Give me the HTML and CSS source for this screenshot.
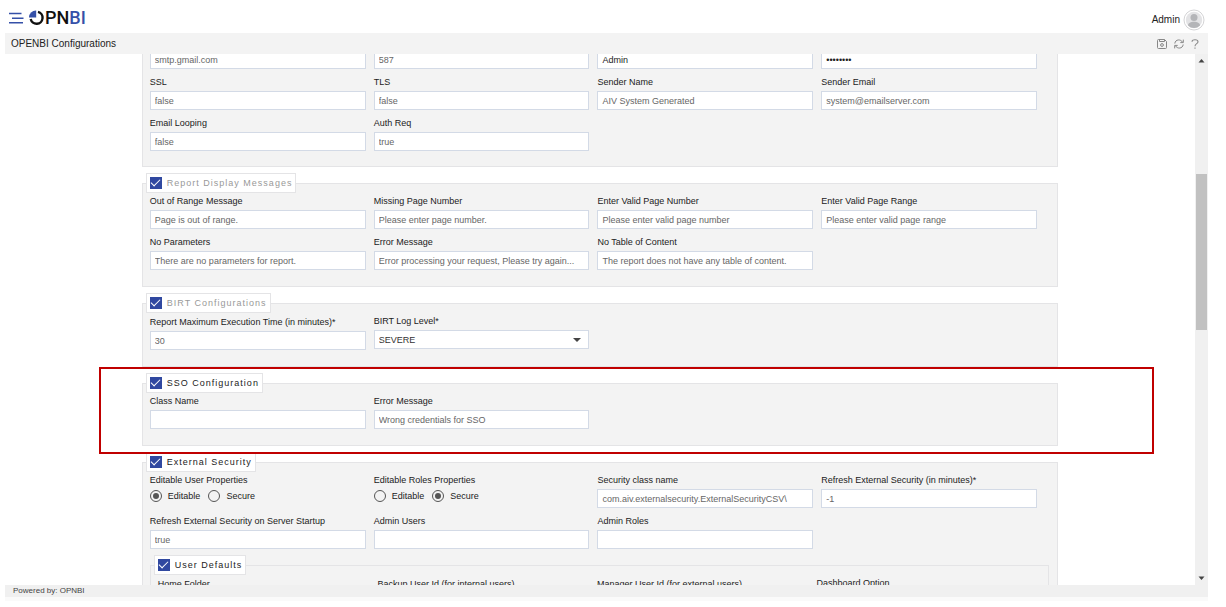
FILE: index.html
```html
<!DOCTYPE html>
<html lang="en">
<head>
<meta charset="utf-8">
<title>OPENBI Configurations</title>
<link rel="stylesheet" href="styles.css">
</head>
<body>
<div class="app">
  <header class="topbar">
    <button class="icon-button" type="button" aria-label="Menu">
      <svg width="15" height="12" viewBox="0 0 15 12" fill="none" stroke="#3550a8" stroke-width="1.6"><path d="M0 1.500h12.500M3 6.200h11.500M0 10.800h14"/></svg>
    </button>
    <div class="logo">
      <svg width="16" height="16" viewBox="0 0 16 16"><path d="M7.200 7.600V.4A7 7 0 0 0 0 7.600z" fill="#3550a8"/><path d="M9 1.900A6 6 0 1 1 1.700 9" fill="none" stroke="#111" stroke-width="2.400"/></svg>
      <span>PN<span class="logo-accent">BI</span></span>
    </div>
    <div class="account">
      <span>Admin</span>
      <svg width="22" height="22" viewBox="0 0 22 22"><circle cx="11" cy="11" r="10" fill="#fff" stroke="#d4d4d6"/><circle cx="11" cy="11" r="8.200" fill="#e3e3e5"/><circle cx="11" cy="8.500" r="3.500" fill="#b4b5b8"/><path d="M5 16.500c0-5 12-5 12 0a8.200 8.200 0 0 1-12 0z" fill="#b4b5b8"/></svg>
    </div>
  </header>

  <div class="titlebar">
    <h1 class="title">OPENBI Configurations</h1>
    <div class="tools">
      <button class="icon-button" type="button" aria-label="Save">
        <svg width="10" height="10" viewBox="0 0 10 10" fill="none" stroke="#888"><path d="M1.500.5h6l2 2v6a1 1 0 0 1-1 1h-7a1 1 0 0 1-1-1v-7a1 1 0 0 1 1-1z"/><path d="M2.500.5v2h5v-2"/><circle cx="5" cy="6" r="1.400"/></svg>
      </button>
      <button class="icon-button" type="button" aria-label="Refresh">
        <svg width="10" height="10" viewBox="0 0 10 10" fill="none" stroke="#888"><path d="M.8 4.500C1.300 0 7 0 8.500 3.200M9.200 5.500C8.700 10 3 10 1.500 6.800M9.300.6v3H6.300M.7 9.400v-3h3"/></svg>
      </button>
      <button class="icon-button" type="button" aria-label="Help">
        <svg width="8" height="10" viewBox="0 0 8 10" fill="none" stroke="#888" stroke-width="1.100"><path d="M1 2.800C1 .1 7 .1 7 2.800 7 4.700 4 4.600 4 7.200M4 8.500v1.300"/></svg>
      </button>
    </div>
  </div>

  <div class="viewport">
    <main class="pane">
      <form class="form">
        <fieldset class="section section-first">
          <div class="grid">
            <div class="field"><input class="text" aria-label="Host" value="smtp.gmail.com"></div>
            <div class="field"><input class="text" aria-label="Port" value="587"></div>
            <div class="field"><input class="text text-dark" aria-label="User" value="Admin"></div>
            <div class="field"><input class="text text-dark" type="password" aria-label="Password" value="password"></div>
            <div class="field"><label for="ssl">SSL</label><input class="text" id="ssl" value="false"></div>
            <div class="field"><label for="tls">TLS</label><input class="text" id="tls" value="false"></div>
            <div class="field"><label for="sname">Sender Name</label><input class="text" id="sname" value="AIV System Generated"></div>
            <div class="field"><label for="smail">Sender Email</label><input class="text" id="smail" value="system@emailserver.com"></div>
            <div class="field"><label for="loop">Email Looping</label><input class="text" id="loop" value="false"></div>
            <div class="field"><label for="auth">Auth Req</label><input class="text" id="auth" value="true"></div>
          </div>
        </fieldset>

        <fieldset class="section">
          <legend class="legend legend-muted"><label class="toggle"><input class="check" type="checkbox" checked>Report Display Messages</label></legend>
          <div class="grid">
            <div class="field"><label for="range">Out of Range Message</label><input class="text" id="range" value="Page is out of range."></div>
            <div class="field"><label for="missing">Missing Page Number</label><input class="text" id="missing" value="Please enter page number."></div>
            <div class="field"><label for="validnum">Enter Valid Page Number</label><input class="text" id="validnum" value="Please enter valid page number"></div>
            <div class="field"><label for="validrange">Enter Valid Page Range</label><input class="text" id="validrange" value="Please enter valid page range"></div>
            <div class="field"><label for="noparam">No Parameters</label><input class="text" id="noparam" value="There are no parameters for report."></div>
            <div class="field"><label for="err">Error Message</label><input class="text" id="err" value="Error processing your request, Please try again..."></div>
            <div class="field"><label for="notoc">No Table of Content</label><input class="text" id="notoc" value="The report does not have any table of content."></div>
          </div>
        </fieldset>

        <fieldset class="section">
          <legend class="legend legend-muted"><label class="toggle"><input class="check" type="checkbox" checked>BIRT Configurations</label></legend>
          <div class="grid">
            <div class="field"><label for="exec">Report Maximum Execution Time (in minutes)*</label><input class="text" id="exec" value="30"></div>
            <div class="field field-select"><label for="log">BIRT Log Level*</label>
              <div class="select-wrap"><select class="text select" id="log"><option>SEVERE</option></select><svg class="caret" width="8" height="4" viewBox="0 0 8 4"><path d="M0 0h8L4 4z" fill="#444"/></svg></div>
            </div>
          </div>
        </fieldset>

        <fieldset class="section section-sso">
          <legend class="legend"><label class="toggle"><input class="check" type="checkbox" checked>SSO Configuration</label></legend>
          <div class="grid">
            <div class="field"><label for="cls">Class Name</label><input class="text" id="cls"></div>
            <div class="field"><label for="ssoerr">Error Message</label><input class="text" id="ssoerr" value="Wrong credentials for SSO"></div>
          </div>
          <div class="highlight"></div>
        </fieldset>

        <fieldset class="section">
          <legend class="legend"><label class="toggle"><input class="check" type="checkbox" checked>External Security</label></legend>
          <div class="grid">
            <div class="field field-radio" role="radiogroup" aria-labelledby="eup">
              <span id="eup">Editable User Properties</span>
              <div class="options"><label class="option"><input class="radio" type="radio" name="eup" checked>Editable</label><label class="option"><input class="radio" type="radio" name="eup">Secure</label></div>
            </div>
            <div class="field field-radio" role="radiogroup" aria-labelledby="erp">
              <span id="erp">Editable Roles Properties</span>
              <div class="options"><label class="option"><input class="radio" type="radio" name="erp">Editable</label><label class="option"><input class="radio" type="radio" name="erp" checked>Secure</label></div>
            </div>
            <div class="field"><label for="sec">Security class name</label><input class="text" id="sec" value="com.aiv.externalsecurity.ExternalSecurityCSV\"></div>
            <div class="field"><label for="refresh">Refresh External Security (in minutes)*</label><input class="text" id="refresh" value="-1"></div>
            <div class="field"><label for="startup">Refresh External Security on Server Startup</label><input class="text" id="startup" value="true"></div>
            <div class="field"><label for="ausers">Admin Users</label><input class="text" id="ausers"></div>
            <div class="field"><label for="aroles">Admin Roles</label><input class="text" id="aroles"></div>
          </div>
          <fieldset class="section section-nested">
            <legend class="legend"><label class="toggle"><input class="check" type="checkbox" checked>User Defaults</label></legend>
            <div class="grid">
              <div class="field"><label for="home">Home Folder</label><input class="text" id="home"></div>
              <div class="field"><label for="backup">Backup User Id (for internal users)</label><input class="text" id="backup"></div>
              <div class="field"><label for="manager">Manager User Id (for external users)</label><input class="text" id="manager"></div>
              <div class="field field-select"><label for="dash">Dashboard Option</label><select class="text select" id="dash"></select></div>
            </div>
          </fieldset>
        </fieldset>
      </form>
    </main>
    <div class="scrollbar">
      <svg class="arrow" width="13" height="13" viewBox="0 0 13 13"><path d="M3.500 8.500h6l-3-3.500z" fill="#444"/></svg>
      <div class="track"><div class="before"></div><div class="thumb"></div><div class="after"></div></div>
      <svg class="arrow" width="13" height="13" viewBox="0 0 13 13"><path d="M3.500 4.500h6l-3 3.500z" fill="#444"/></svg>
    </div>
  </div>

  <footer class="footer">Powered by: OPNBI</footer>
</div>
</body>
</html>
```
FILE: styles.css
```css
* { box-sizing: border-box; }

body {
  margin: 0;
  background: #fff;
  color: #222;
  font: 9px/12px "Liberation Sans", Arial, sans-serif;
}

svg { display: block; flex: none; }

.app {
  display: flex;
  flex-direction: column;
  height: 100vh;
  padding: 0 18px 6px 5px;
}

.topbar {
  display: flex;
  align-items: center;
  flex: none;
  gap: 5px;
  height: 33px;
  padding: 3px 3px 0 4px;
}

.icon-button {
  padding: 0;
  border: 0;
  background: none;
}

.logo {
  display: flex;
  align-items: center;
  color: #111;
  font: 500 18px/20px Roboto, "Liberation Sans", sans-serif;
}

.logo-accent { color: #3550a8; }

.account {
  display: flex;
  align-items: center;
  gap: 3px;
  margin-left: auto;
  padding-top: 4px;
  font-size: 10px;
}

.titlebar {
  display: flex;
  align-items: center;
  justify-content: space-between;
  flex: none;
  height: 21px;
  padding: 0 9px 0 6px;
  background: #f3f3f3;
}

.title {
  margin: 0;
  font-size: 10px;
  font-weight: 400;
}

.tools {
  display: flex;
  gap: 7px;
}

.viewport {
  display: flex;
  flex: 1;
  min-height: 0;
}

.pane {
  flex: 1;
  overflow: hidden;
}

.form {
  display: flex;
  flex-direction: column;
  gap: 6px;
  width: 77%;
  margin: -4px auto 0;
}

.section {
  position: relative;
  min-width: 0;
  margin: 0;
  padding: 2px 4px 16px 3px;
  border: 1px solid #e4e4e6;
  background: #f3f3f3;
}

.section-first {
  padding-top: 0;
  padding-bottom: 15px;
  border-top: 0;
}

.section-nested { margin: 6px 4px 0; }

.legend {
  height: 20px;
  padding: 3px;
  border: 1px solid #e4e4e6;
  background: #fff;
  letter-spacing: 1px;
}

.legend-muted { color: #999; }

.toggle {
  display: flex;
  align-items: center;
  gap: 5px;
}

.check {
  appearance: none;
  display: grid;
  place-items: center;
  width: 12px;
  height: 12px;
  margin: 0;
  background: #3048a0;
}

.check:checked::before {
  content: "";
  width: 8px;
  height: 4px;
  margin-bottom: 4px;
  border: solid #fff;
  border-width: 0 0 1px 1px;
  rotate: -45deg;
}

.grid {
  display: grid;
  grid-template-columns: repeat(4, minmax(0, 1fr));
  align-items: end;
  gap: 7px 8px;
  padding: 0 16px 0 4px;
}

.field {
  display: flex;
  flex-direction: column;
  gap: 3px;
}

.field-select { padding-bottom: 1px; }

.field-radio {
  align-self: start;
  gap: 4px;
}

.text {
  width: 100%;
  height: 19px;
  padding: 0 4px;
  border: 1px solid #d3dae6;
  border-radius: 0;
  background: #fff;
  color: #666;
  font: inherit;
  text-overflow: ellipsis;
}

.text-dark { color: #222; }

.select-wrap {
  display: flex;
  position: relative;
}

.select {
  appearance: none;
  color: #333;
}

.caret {
  position: absolute;
  top: 8px;
  right: 8px;
  pointer-events: none;
}

.options {
  display: flex;
  gap: 8px;
}

.option {
  display: flex;
  align-items: center;
  gap: 6px;
}

.radio {
  appearance: none;
  display: grid;
  place-items: center;
  width: 12px;
  height: 12px;
  margin: 0;
  border: 1px solid #555;
  border-radius: 50%;
}

.radio:checked::before {
  content: "";
  width: 6px;
  height: 6px;
  border-radius: 50%;
  background: #555;
}

.section-sso { z-index: 1; }

.highlight {
  position: absolute;
  top: -26px;
  right: -97px;
  bottom: -9px;
  left: -44px;
  border: 2px solid #c00000;
  pointer-events: none;
}

.scrollbar {
  display: flex;
  flex-direction: column;
  flex: none;
  width: 13px;
  background: #f0f0f0;
}

.track {
  display: flex;
  flex: 1;
  flex-direction: column;
  padding: 0 1px;
}

.before { flex: 107; }
.thumb { flex: 156; background: #c1c1c1; }
.after { flex: 242; }

.footer {
  flex: none;
  height: 16px;
  padding: 0 8px;
  border-bottom: 4px solid #fafafa;
  background: #f0f0f0;
  color: #444;
  font-size: 8px;
  line-height: 12px;
}
```
